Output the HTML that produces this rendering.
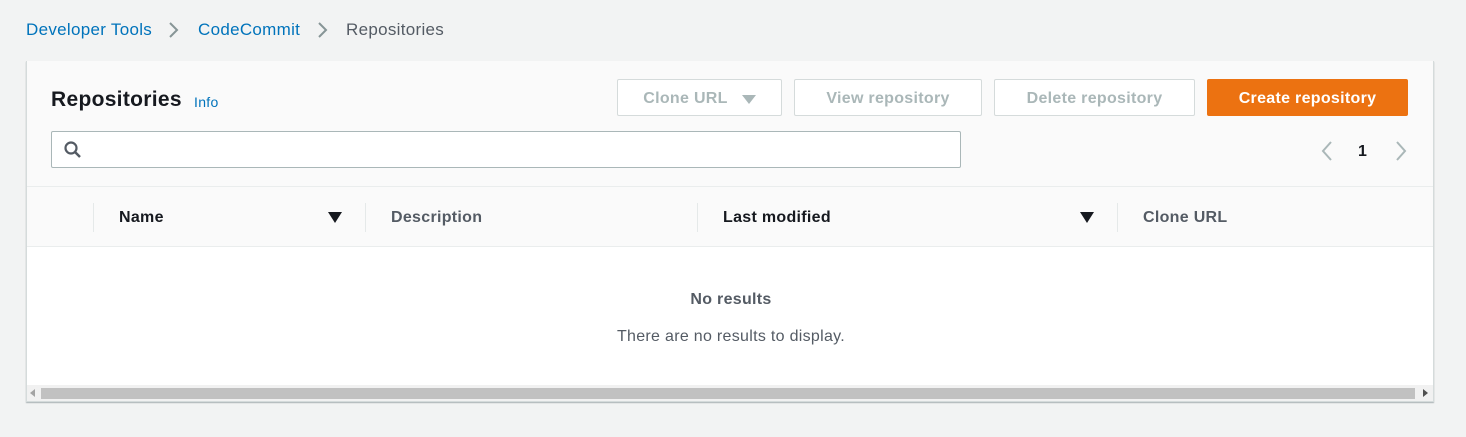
<!DOCTYPE html><html><head><style>
*{margin:0;padding:0;box-sizing:border-box}
body{width:1466px;height:437px;background:#f2f3f3;font-family:"Liberation Sans",sans-serif;position:relative;overflow:hidden;color:#16191f;letter-spacing:0.3px}
.a{position:absolute;white-space:nowrap}
.bc{top:20px;font-size:17px;color:#0073bb}
.btn{position:absolute;top:79px;height:37px;border:1px solid #d5dbdb;background:#fff;border-radius:2px;color:#aab7b8;font-weight:bold;font-size:16px;display:flex;align-items:center;justify-content:center;padding-top:2px}
.th{top:209px;font-size:16px;font-weight:bold;color:#16191f}
.sep{position:absolute;top:203px;width:1px;height:29px;background:#e5e9e9}
</style></head><body>
<div class="a bc" style="left:26px">Developer Tools</div>
<svg class="a" style="left:168px;top:21px" width="12" height="18"><path d="M2 2l7 7-7 7" stroke="#879596" stroke-width="2" fill="none"/></svg>
<div class="a bc" style="left:198px">CodeCommit</div>
<svg class="a" style="left:317px;top:21px" width="12" height="18"><path d="M2 2l7 7-7 7" stroke="#879596" stroke-width="2" fill="none"/></svg>
<div class="a bc" style="left:346px;color:#545b64">Repositories</div>

<div class="a" style="left:26px;top:61px;width:1408px;height:341px;background:#fff;border:1px solid #d5dbdb;border-top:none;box-shadow:0 1px 1px rgba(0,28,36,.3)">
<div style="position:absolute;left:0;top:0;width:100%;height:126px;background:#fafafa;border-bottom:1px solid #eaeded"></div>
<div style="position:absolute;left:0;top:126px;width:100%;height:60px;background:#fafafa;border-bottom:1px solid #eaeded"></div>
</div>

<div class="a" style="left:51px;top:88px;font-size:21px;font-weight:bold">Repositories</div>
<div class="a" style="left:194px;top:94px;font-size:14px;color:#0073bb">Info</div>

<div class="btn" style="left:617px;width:165px">Clone URL<svg style="margin-left:14px" width="14" height="10"><path d="M0 1h14L7 10z" fill="#aab7b8"/></svg></div>
<div class="btn" style="left:794px;width:188px">View repository</div>
<div class="btn" style="left:994px;width:201px">Delete repository</div>
<div class="btn" style="left:1207px;width:201px;background:#ec7211;border-color:#ec7211;color:#fff">Create repository</div>

<div class="a" style="left:51px;top:131px;width:910px;height:37px;border:1px solid #aab7b8;border-radius:2px;background:#fff"></div>
<svg class="a" style="left:63px;top:140px" width="20" height="20"><circle cx="8" cy="8" r="5.5" stroke="#545b64" stroke-width="2.2" fill="none"/><path d="M12 12l5 5" stroke="#545b64" stroke-width="2.5"/></svg>

<svg class="a" style="left:1320px;top:140px" width="14" height="22"><path d="M11 2l-8 9 8 9" stroke="#aab7b8" stroke-width="2" fill="none"/></svg>
<div class="a" style="left:1358px;top:143px;font-size:16px;font-weight:bold">1</div>
<svg class="a" style="left:1394px;top:140px" width="14" height="22"><path d="M3 2l8 9-8 9" stroke="#aab7b8" stroke-width="2" fill="none"/></svg>

<div class="sep" style="left:93px"></div>
<div class="a th" style="left:119px">Name</div>
<svg class="a" style="left:328px;top:212px" width="14" height="11"><path d="M0 0h14L7 11z" fill="#16191f"/></svg>
<div class="sep" style="left:365px"></div>
<div class="a th" style="left:391px;color:#545b64">Description</div>
<div class="sep" style="left:697px"></div>
<div class="a th" style="left:723px">Last modified</div>
<svg class="a" style="left:1080px;top:212px" width="14" height="11"><path d="M0 0h14L7 11z" fill="#16191f"/></svg>
<div class="sep" style="left:1117px"></div>
<div class="a th" style="left:1143px;color:#545b64">Clone URL</div>

<div class="a" style="left:0;width:1466px;text-align:center;top:291px;font-size:16px;font-weight:bold;color:#545b64;padding-right:4px">No results</div>
<div class="a" style="left:0;width:1466px;text-align:center;top:328px;font-size:16px;color:#545b64;padding-right:4px">There are no results to display.</div>

<div class="a" style="left:27px;top:385px;width:1406px;height:16px;background:#f1f1f1"></div>
<div class="a" style="left:41px;top:388px;width:1374px;height:11px;background:#c1c1c1"></div>
<svg class="a" style="left:30px;top:389px" width="6" height="8"><path d="M5 0v8L0 4z" fill="#a3a3a3"/></svg>
<svg class="a" style="left:1423px;top:389px" width="6" height="8"><path d="M0 0v8l5-4z" fill="#505050"/></svg>
</body></html>
